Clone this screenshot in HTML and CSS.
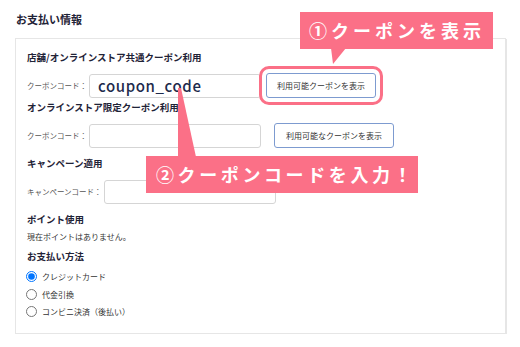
FILE: index.html
```
<!DOCTYPE html>
<html lang="ja">
<head>
    <meta charset="UTF-8">
    <meta name="viewport" content="width=device-width, initial-scale=1.0">
    <title>お支払い情報</title>
    <link rel="stylesheet" href="styles.css">
</head>
<body>
    <div class="page">
        <h1 class="page-title">お支払い情報</h1>
        <div class="card">
            <h3 class="sec-title">店舗/オンラインストア共通クーポン利用</h3>
            <div class="field-row">
                <label class="field-label" for="coupon1">クーポンコード：</label>
                <input type="text" id="coupon1" class="field-input code-input" value="coupon_code">
                <button type="button" class="btn-coupon btn-first">利用可能クーポンを表示</button>
            </div>

            <h3 class="sec-title tight">オンラインストア限定クーポン利用</h3>
            <div class="field-row">
                <label class="field-label" for="coupon2">クーポンコード：</label>
                <input type="text" id="coupon2" class="field-input">
                <button type="button" class="btn-coupon btn-second">利用可能なクーポンを表示</button>
            </div>

            <h3 class="sec-title">キャンペーン適用</h3>
            <div class="field-row">
                <label class="field-label" for="campaign">キャンペーンコード：</label>
                <input type="text" id="campaign" class="field-input">
            </div>

            <h3 class="sec-title">ポイント使用</h3>
            <p class="note">現在ポイントはありません。</p>

            <h3 class="sec-title small-gap">お支払い方法</h3>
            <div class="radio-list">
                <label class="radio-item"><input type="radio" name="pay" checked> クレジットカード</label>
                <label class="radio-item"><input type="radio" name="pay"> 代金引換</label>
                <label class="radio-item"><input type="radio" name="pay"> コンビニ決済（後払い）</label>
            </div>
        </div>

        <!-- annotations -->
        <svg class="pointers" width="520" height="347" viewBox="0 0 520 347">
            <polygon points="331,48 346,48 333,64" fill="#fb7087"/>
            <polygon points="178,88 181,88 196,157 178,157" fill="#fb7087"/>
        </svg>
        <div class="callout callout-1">①クーポンを表示</div>
        <div class="callout callout-2">②クーポンコードを入力！</div>
    </div>
</body>
</html>
```
FILE: styles.css
```
body {
    margin: 0;
    background-color: #fff;
    font-family: "Noto Sans CJK JP", "Noto Sans", sans-serif;
    color: #1f2337;
}

.page {
    position: relative;
    padding: 11px 14px 0 15px;
}

.page-title {
    margin: 0 0 0 1px;
    font-size: 11px;
    line-height: 16px;
    font-weight: bold;
}

.card {
    margin-top: 11px;
    padding: 11px 11px 12px;
    border: 1px solid #e6e6e6;
    box-shadow: 1px 1px 0 #e6e6e6;
}

.sec-title {
    margin: 8px 0 0;
    font-size: 9.5px;
    line-height: 14px;
    font-weight: bold;
}

.sec-title:first-child {
    margin-top: 0;
}

.sec-title.tight {
    margin-top: 2px;
}

.sec-title.small-gap {
    margin-top: 5px;
}

.field-row {
    display: flex;
    align-items: center;
    margin-top: 9px;
    height: 25px;
}

.field-label {
    font-size: 7.5px;
    color: #555;
    margin-right: 2px;
}

.field-input {
    width: 172px;
    height: 24px;
    box-sizing: border-box;
    border: 1px solid #d5d5d5;
    border-radius: 3px;
    padding: 0 8px;
    font-family: inherit;
}

.code-input {
    font-size: 15px;
    font-weight: 500;
    letter-spacing: 0.6px;
    color: #1d2a4c;
}

.btn-coupon {
    height: 25px;
    padding: 0 10px;
    background: #fff;
    border: 1px solid #7d9bd0;
    border-radius: 3px;
    font-family: inherit;
    font-size: 8px;
    color: #333;
    cursor: pointer;
}

.btn-first {
    margin-left: 5px;
    outline: 3px solid #fb7087;
    outline-offset: 4px;
}

.btn-second {
    margin-left: 13px;
    padding: 0 11px;
}

.note {
    margin: 4px 0 0;
    font-size: 8px;
    line-height: 14px;
    color: #333;
}

.radio-list {
    margin-top: 5px;
}

.radio-item {
    display: flex;
    align-items: center;
    height: 17.5px;
    font-size: 8px;
    color: #333;
}

.radio-item input {
    width: 11px;
    height: 11px;
    margin: 0 5px 0 -1px;
}

.pointers {
    position: absolute;
    top: 0;
    left: 0;
    pointer-events: none;
}

.callout {
    position: absolute;
    height: 37px;
    box-sizing: border-box;
    padding-left: 9px;
    background-color: #fb7087;
    color: #fff;
    font-size: 18px;
    font-weight: bold;
    line-height: 37px;
    letter-spacing: 4px;
    white-space: nowrap;
}

.callout-1 {
    top: 12px;
    left: 300px;
    width: 193px;
}

.callout-2 {
    top: 156px;
    left: 146px;
    width: 272px;
    padding-left: 10px;
    letter-spacing: 3.6px;
}
```
